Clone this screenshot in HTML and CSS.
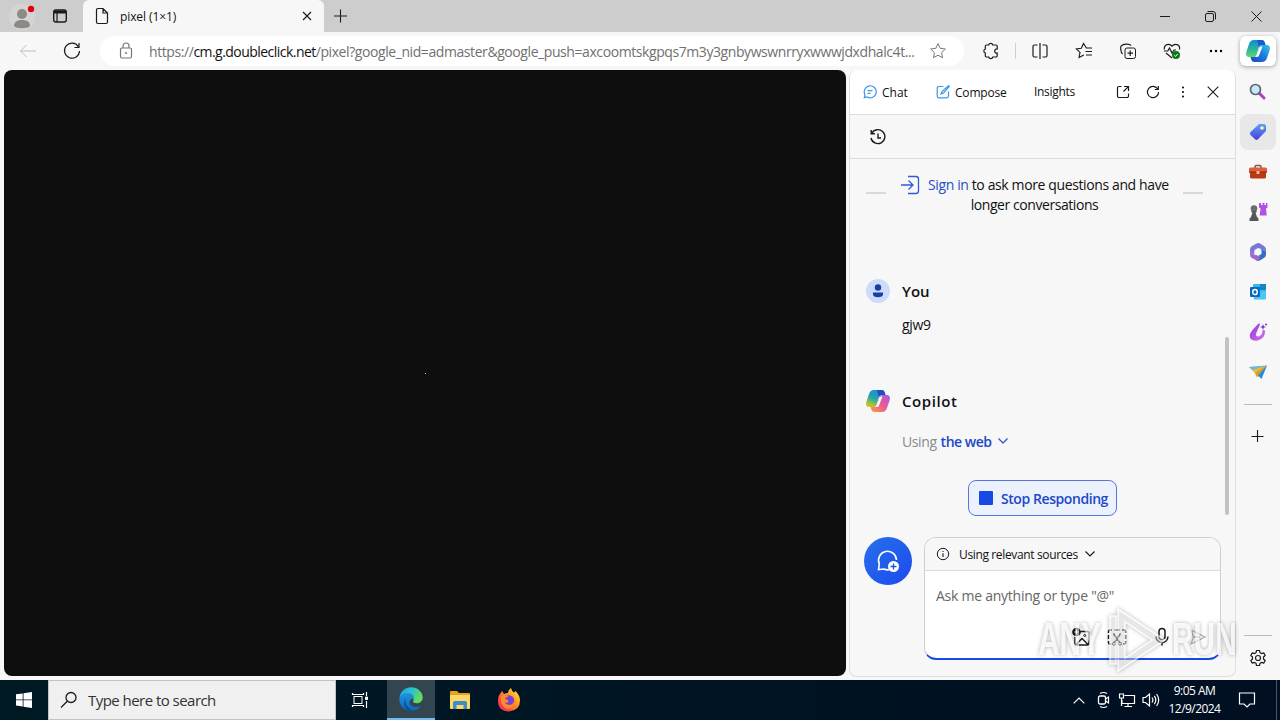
FILE: index.html
```
<!DOCTYPE html>
<html lang="en">
<head>
    <meta charset="utf-8">
    <title>pixel (1×1)</title>
    <link rel="stylesheet" href="styles.css">
</head>
<body>
    <div class="tabbar">
        <div class="tab-actions">
            <div class="profile">
                <svg width="28" height="28" viewBox="0 0 28 28"><circle cx="14" cy="14" r="13" fill="#d6d4d2"/><circle cx="14" cy="11" r="5" fill="#8d8986"/><path d="M6 23c0-4 3-6 8-6s8 2 8 6c-2 3-14 3-16 0z" fill="#8d8986"/><circle cx="23" cy="6" r="3.2" fill="#e0000f"/></svg>
            </div>
            <svg class="line" width="16" height="16" viewBox="0 0 16 16"><rect x="1.7" y="2" width="12.6" height="12" rx="2.2" stroke-width="1.4"/><path d="M2 3.4h12M2 4.6h12" stroke-width="2"/><path d="M5 5v9" stroke-width="1.2"/></svg>
        </div>
        <div class="tab">
            <svg class="line" width="16" height="18" viewBox="0 0 16 18"><path d="M2.5 3c0-.8.5-1.500 1.300-1.500H9l4.500 4.600V15c0 .9-.6 1.500-1.500 1.500H4c-.9 0-1.500-.6-1.500-1.500zM9 1.500V6h4.500" stroke-width="1.200"/></svg>
            <span class="tab-title">pixel (1×1)</span>
            <svg class="line" width="10" height="10" viewBox="0 0 10 10"><path d="M1 1l8 8M9 1L1 9" stroke-width="1.2"/></svg>
        </div>
        <svg class="line new-tab" width="14" height="14" viewBox="0 0 14 14"><path d="M7.500 .5v13M1 7h13" stroke-width="1.1"/></svg>
        <div class="window-buttons">
            <span><svg class="line" width="10" height="10" viewBox="0 0 10 10"><path d="M0 5.500h10"/></svg></span>
            <span><svg class="line" width="11" height="11" viewBox="0 0 11 11"><rect x=".5" y="2.500" width="8" height="8" rx="1.500"/><path d="M2.500.5H8a2.500 2.500 0 0 1 2.500 2.500v5.500"/></svg></span>
            <span><svg class="line" width="11" height="11" viewBox="0 0 11 11"><path d="M.5.5l10 10M10.500.5l-10 10"/></svg></span>
        </div>
    </div>

    <div class="toolbar">
        <span class="tool faded"><svg class="line" width="18" height="14" viewBox="0 0 18 14"><path d="M17 7H1.500M7.500 1L1.500 7l6 6"/></svg></span>
        <span class="tool"><svg class="line" width="18" height="18" viewBox="0 0 18 18"><path d="M15.300 4.600A7.500 7.500 0 1 0 16.500 9M16 1v4.500h-4.500" stroke-width="1.200"/></svg></span>
        <div class="omnibox">
            <svg class="line grey" width="14" height="18" viewBox="0 0 14 18"><rect x="1.500" y="6" width="11" height="10" rx="1.500" stroke-width="1.200"/><path d="M4 6V4a3 3 0 0 1 6 0v2" stroke-width="1.200"/><circle cx="7" cy="11" r=".7"/></svg>
            <span class="url">https://<b>cm.g.doubleclick.net</b>/pixel?google_nid=admaster&amp;google_push=axcoomtskgpqs7m3y3gnbywswnrryxwwwjdxdhalc4t...</span>
            <svg class="line grey" width="18" height="18" viewBox="0 0 18 18"><path d="M9 1.600l2.200 4.700 5.100.7-3.700 3.600.9 5.100L9 13.200l-4.500 2.500.9-5.100L1.700 7l5.100-.7z"/></svg>
        </div>
        <span class="tool ext"><svg class="line" width="18" height="18" viewBox="0 0 18 18"><path d="M4.500 3h2.200a2.100 2.100 0 0 1 4.100 0H14a1.200 1.200 0 0 1 1.200 1.200V7a2.100 2.100 0 1 0 0 4.100v2.700A1.200 1.200 0 0 1 14 15h-3.200a2.100 2.100 0 0 1-4.100 0H4.500a1.200 1.200 0 0 1-1.200-1.200V11a2.100 2.100 0 0 1 0-4V4.200A1.200 1.200 0 0 1 4.500 3z" stroke-width="1.200"/></svg></span>
        <span class="tool-sep"></span>
        <span class="tool"><svg class="line" width="18" height="18" viewBox="0 0 18 18"><path d="M9 1v16M6.500 3H3.500A1.500 1.500 0 0 0 2 4.500v9A1.500 1.500 0 0 0 3.500 15h3M11.500 3h3A1.500 1.500 0 0 1 16 4.500v9a1.500 1.500 0 0 1-1.500 1.500h-3" stroke-width="1.200"/></svg></span>
        <span class="tool"><svg class="line" width="18" height="18" viewBox="0 0 18 18"><path d="M11.500 6.200L8.500 1.500 6.300 6.200l-5 .7L5 10.400l-.9 5.100 4.700-2.600M10.500 9.500H17M11 13h6M11.300 6H17" stroke-width="1.100"/></svg></span>
        <span class="tool"><svg class="line" width="18" height="18" viewBox="0 0 18 18"><rect x="6" y="6" width="10.500" height="10.500" rx="2"/><path d="M11.200 8.500v5.500M8.500 11.200H14M3.500 12C1.800 10.500 1 5 2.300 3.800 4 2 10 1.200 12 3.500" stroke-width="1.200"/></svg></span>
        <span class="tool"><svg class="line" width="18" height="18" viewBox="0 0 18 18"><path d="M1.300 7.500C.8 2 6.500 1 9 4.200 11.500 1 17.500 2 16.500 7.500M.8 9h4l1.700-3 2.500 5 2-3h2M3 11l6 5" stroke-width="1.200"/><circle cx="13" cy="13" r="4" fill="#0d7a16" stroke="none"/><path d="M11.300 13.200l1.300 1.200 2.200-2.500" stroke="#fff"/></svg></span>
        <span class="tool"><svg width="14" height="4" viewBox="0 0 14 4"><circle cx="2" cy="2" r="1.200"/><circle cx="7" cy="2" r="1.200"/><circle cx="12" cy="2" r="1.200"/></svg></span>
        <span class="copilot-button">
            <svg width="26" height="26" viewBox="0 0 26 26">
                <defs>
                    <linearGradient id="cpA" x1="0" y1="0" x2="0" y2="1"><stop offset="0" stop-color="#1488d8"/><stop offset=".5" stop-color="#27b3a0"/><stop offset="1" stop-color="#63d66c"/></linearGradient>
                    <linearGradient id="cpB" x1="1" y1="0" x2="0" y2="1"><stop offset="0" stop-color="#35c3ee"/><stop offset=".5" stop-color="#1b78e0"/><stop offset="1" stop-color="#1848b8"/></linearGradient>
                </defs>
                <path d="M9 2h7.500c2 0 2.800 1.300 3.400 3l.6 2h-3.200c-2 0-3 .9-3.600 2.700l-2 6.600c-.6 2-1.700 2.700-3.500 2.700H4.600C1.600 19 .5 17 1.300 14L4 6c.9-2.800 2.400-4 5-4z" fill="url(#cpA)"/>
                <path d="M12 2h4.500c2 0 2.800 1.300 3.400 3l.6 2h-3.200c-1.700 0-2.800.8-3.400 2.300z" fill="#155fc6"/>
                <path d="M17 24H9.500c-2 0-2.800-1.300-3.400-3l-.6-2h3.200c2 0 3-.9 3.600-2.700l2-6.600c.6-2 1.700-2.700 3.500-2.700h3.600c3 0 4.100 2 3.300 5L22 20c-.9 2.800-2.400 4-5 4z" fill="url(#cpB)"/>
                <path d="M15.500 8.500h2l-3.500 9q-.6 1.500-2.300 1.500h-1.500q1.300-.8 1.900-2.500l2-6q.4-1.300 1.400-2z" fill="#fff"/>
            </svg>
        </span>
    </div>

    <div class="content">
        <div class="page"><span class="pixel"></span></div>

        <div class="panel">
            <div class="panel-tabs">
                <svg class="line" width="14" height="14" viewBox="0 0 14 14"><path d="M1.300 12.700l.7-3A6 6 0 1 1 4.300 12z" class="blue-line"/><path d="M4.500 5.700h5M4.500 8.300h3" class="blue-line"/></svg>
                <span class="chat-label">Chat</span>
                <svg class="line" width="14" height="14" viewBox="0 0 14 14"><path d="M7.500 1.500H3A1.800 1.800 0 0 0 1.200 3.300V11A1.800 1.800 0 0 0 3 12.800h7.700A1.800 1.800 0 0 0 12.500 11V6.500M5 9l1-2.500L12.500.7l.8.8L7.500 8z" class="blue-line"/></svg>
                <span class="compose-label">Compose</span>
                <span class="insights-label">Insights</span>
                <div class="panel-icons">
                    <span><svg class="line" width="14" height="14" viewBox="0 0 14 14"><path d="M5.500 1.500H3A1.500 1.500 0 0 0 1.500 3v8A1.500 1.500 0 0 0 3 12.500h8a1.500 1.500 0 0 0 1.500-1.500V8.500M8 1.500h4.500V6M12.300 1.700L7.500 6.500" stroke-width="1.200"/></svg></span>
                    <span><svg class="line" width="14" height="14" viewBox="0 0 14 14"><path d="M11.700 4A5.600 5.600 0 1 0 12.600 7M12.300 1v3.500H8.800" stroke-width="1.200"/></svg></span>
                    <span><svg width="4" height="14" viewBox="0 0 4 14"><circle cx="2" cy="2.500" r="1"/><circle cx="2" cy="7" r="1"/><circle cx="2" cy="11.500" r="1"/></svg></span>
                    <span><svg class="line" width="12" height="12" viewBox="0 0 12 12"><path d="M.7.7l10.600 10.600M11.300.7L.7 11.300" stroke-width="1.100"/></svg></span>
                </div>
            </div>
            <div class="history">
                <svg class="line" width="18" height="18" viewBox="0 0 18 18"><path d="M2.700 5.300A7 7 0 1 1 2 10M2.200 2v3.700h3.700M9 5.500V10h3" stroke-width="1.400"/></svg>
            </div>
            <div class="signin">
                <i></i>
                <p>
                    <svg class="line" width="20" height="20" viewBox="0 0 20 20"><path d="M8 1.500h8A2.500 2.500 0 0 1 18.500 4v12a2.500 2.500 0 0 1-2.500 2.500H8M1 10h12M8.500 5.500L13 10l-4.500 4.500" class="deep-line"/></svg>
                    <span class="signin-first"><a>Sign in</a> to ask more questions and have</span>
                    <span class="signin-second">longer conversations</span>
                </p>
                <i></i>
            </div>
            <div class="author you">
                <svg width="24" height="24" viewBox="0 0 24 24"><circle cx="12" cy="12" r="12" fill="#ccdcfa"/><circle cx="12" cy="8.500" r="3.200" fill="#173fa8"/><path d="M7 13.500h10v1.700c0 2-2 3-5 3s-5-1-5-3z" fill="#173fa8"/></svg>
                <span>You</span>
            </div>
            <p class="message">gjw9</p>
            <div class="author bot">
                <svg width="26" height="26" viewBox="0 0 26 26">
                    <defs>
                        <linearGradient id="cpC" x1=".5" y1="0" x2="0" y2="1"><stop offset="0" stop-color="#168be0"/><stop offset=".45" stop-color="#2aa6a5"/><stop offset=".75" stop-color="#9bc43c"/><stop offset="1" stop-color="#f5bd23"/></linearGradient>
                        <linearGradient id="cpD" x1="1" y1="0" x2="0" y2="1"><stop offset="0" stop-color="#a55bea"/><stop offset=".5" stop-color="#ee5a93"/><stop offset="1" stop-color="#ffa03d"/></linearGradient>
                    </defs>
                    <path d="M9 2h7.500c2 0 2.800 1.300 3.400 3l.6 2h-3.200c-2 0-3 .9-3.600 2.700l-2 6.600c-.6 2-1.700 2.700-3.500 2.700H4.600C1.600 19 .5 17 1.300 14L4 6c.9-2.800 2.400-4 5-4z" fill="url(#cpC)"/>
                    <path d="M12 2h4.500c2 0 2.800 1.300 3.400 3l.6 2h-3.200c-1.700 0-2.800.8-3.400 2.300z" fill="#1f50bd"/>
                    <path d="M17 24H9.500c-2 0-2.800-1.300-3.400-3l-.6-2h3.200c2 0 3-.9 3.600-2.700l2-6.600c.6-2 1.700-2.700 3.500-2.700h3.600c3 0 4.100 2 3.300 5L22 20c-.9 2.800-2.400 4-5 4z" fill="url(#cpD)"/>
                    <path d="M15.500 8.500h2l-3.500 9q-.6 1.500-2.300 1.500h-1.500q1.300-.8 1.900-2.500l2-6q.4-1.300 1.400-2z" fill="#f7f7f7"/>
                </svg>
                <span>Copilot</span>
            </div>
            <p class="using"><span>Using</span> <b>the web</b>
                <svg class="line" width="10" height="6" viewBox="0 0 10 6"><path d="M.5.500L5 5 9.500.5" class="deep-line"/></svg>
            </p>
            <button class="stop"><i></i><span>Stop Responding</span></button>
            <div class="composer">
                <div class="new-topic">
                    <svg width="24" height="24" viewBox="0 0 24 24" fill="none"><path d="M20.500 11A9 9 0 1 0 3.300 15L2.500 20.500 8 20a9 9 0 0 0 5 .8" stroke="#fff" stroke-width="1.600"/><circle cx="17.500" cy="17.500" r="5.500" fill="#fff"/><path d="M17.500 14.500v6M14.500 17.500h6" stroke="#1c50e8" stroke-width="1.300"/></svg>
                </div>
                <div class="askbox">
                    <div class="sources">
                        <svg class="line" width="14" height="14" viewBox="0 0 14 14"><circle cx="7" cy="7" r="5.700"/><path d="M7 6.300V10M7 4v1.100" stroke-width="1.100"/></svg>
                        <span>Using relevant sources</span>
                        <svg class="line" width="10" height="6" viewBox="0 0 10 6"><path d="M.5.500L5 5 9.500.5" stroke-width="1.200"/></svg>
                    </div>
                    <p class="placeholder">Ask me anything or type "@"</p>
                    <div class="ask-icons">
                        <svg class="line" width="18" height="20" viewBox="0 0 18 20"><path d="M8.500 4.500H15A2 2 0 0 1 17 6.500v9.500a2 2 0 0 1-2 2H5a2 2 0 0 1-2-2v-6M4 17.500l6-6 6 6" stroke-width="1.500"/><circle cx="12.700" cy="8.500" r="1"/><circle cx="4.500" cy="5" r="4.300" fill="#111" stroke="none"/><path d="M4.500 2.800v4.400M2.300 5h4.400" stroke="#fff"/></svg>
                        <svg class="line" width="20" height="20" viewBox="0 0 20 20"><path d="M1.500 6V4.500A1.500 1.500 0 0 1 3 3h2M7.500 3h5M15 3h2a1.500 1.500 0 0 1 1.500 1.500V6M18.500 8v4M18.500 14v1.500A1.500 1.500 0 0 1 17 17h-1M4 17H3a1.500 1.500 0 0 1-1.500-1.500V14M1.500 12V8M6.500 6.500l6 9M13.500 6.500l-6 9" stroke-width="1.500"/><circle cx="7" cy="16.700" r="1.500"/><circle cx="13" cy="16.700" r="1.500"/></svg>
                        <svg class="line mic" width="16" height="20" viewBox="0 0 16 20"><rect x="5" y="1.500" width="6" height="11" rx="3" stroke-width="1.500"/><path d="M2 9.500a6 6 0 0 0 12 0M8 15.500V18.500" stroke-width="1.500"/></svg>
                        <svg class="line send" width="18" height="18" viewBox="0 0 18 18"><path d="M2 2l14 7L2 16l2.500-7zM4.500 9H11" stroke-width="1.300"/></svg>
                    </div>
                </div>
            </div>
            <div class="scroll-thumb"></div>
        </div>

        <div class="sidebar">
            <span><svg width="20" height="20" viewBox="0 0 20 20"><path d="M11 11l5 5" stroke="#b23fc4" stroke-width="3" stroke-linecap="round"/><circle cx="7.500" cy="7.500" r="5" fill="#c4e9fb" stroke="#5f6670" stroke-width="1.700"/></svg></span>
            <span class="selected"><svg width="20" height="20" viewBox="0 0 20 20"><defs><linearGradient id="tag" x1="0" y1="0" x2="0" y2="1"><stop offset="0" stop-color="#5aa0ff"/><stop offset="1" stop-color="#4a3fd2"/></linearGradient></defs><path d="M11 2h5.500L18 3.500V9l-8 8.300q-1.500 1.400-3 0L2.500 13q-1.400-1.500 0-3z" fill="url(#tag)"/><circle cx="14" cy="6" r="1.800" fill="#fff3a0"/></svg></span>
            <span><svg width="20" height="20" viewBox="0 0 20 20"><path d="M7 6V4.500Q7 3.500 8 3.500h4q1 0 1 1V6" fill="none" stroke="#7b5a4e" stroke-width="1.500"/><rect x="1" y="5.500" width="18" height="5.500" rx="1.500" fill="#dc6138"/><path d="M2 10h16v5q0 1.500-1.500 1.500h-13Q2 16.500 2 15z" fill="#b93a14"/><path d="M1 10h18" stroke="#8c2508"/><rect x="8.500" y="9" width="3" height="3" fill="#f5b79c"/></svg></span>
            <span><svg width="20" height="20" viewBox="0 0 20 20"><path d="M11 1h2v2h1.500V1h2v2H18V1h1.500v4.500l-1.500 1 .7 7h-7l.8-7L11 5.500z" fill="#b152e3"/><circle cx="6" cy="6.500" r="3.300" fill="#6c6c70"/><path d="M3.500 9h5v1.500h-1L9 15l1.500 1.500V19h-9v-2.500L3 15l1.500-4.500h-1z" fill="#56565a"/></svg></span>
            <span><svg width="20" height="20" viewBox="0 0 20 20"><path d="M11.500 1.200L16 4q2 1.200 2 3.500v2L12 6.200 6.500 9v4L2 10.500v-3Q2 5.200 4 4l4.500-2.500q1.500-.7 3-.3z" fill="#7b77d8"/><path d="M18 9.500v3.300q0 2-1.700 3l-4.500 2.700q-1.500.8-3 .2L7 13l5.500-1V6.500z" fill="#326fc0"/><path d="M2 10.500L6.500 13l5.300 1-1 5q-1 .3-2.300-.5L4 16q-2-1.200-2-3.500z" fill="#a467c8"/><path d="M10 6l3.500 2v4L10 14l-3.500-2V8z" fill="#f7f7f7"/></svg></span>
            <span><svg width="20" height="20" viewBox="0 0 20 20"><rect x="5" y="2" width="13" height="12" rx="1" fill="#35b6ed"/><path d="M12 2h6v6h-6z" fill="#1683c5"/><path d="M5 10l13-1v7.500q0 1-1 1H6z" fill="#47c8f5"/><rect x="2" y="5" width="10" height="10" rx="1" fill="#0868ba"/><ellipse cx="7" cy="10" rx="2.300" ry="2.600" fill="none" stroke="#fff" stroke-width="1.500"/></svg></span>
            <span><svg width="20" height="20" viewBox="0 0 20 20"><defs><linearGradient id="des" x1="0" y1="0" x2="1" y2="1"><stop offset="0" stop-color="#8a37d6"/><stop offset="1" stop-color="#db73ee"/></linearGradient></defs><path d="M10.500 1.500L4.500 8Q0 13.500 2.800 17q2.500 2.500 7 1.500Q17.500 16.500 17 9q-1-1.500-2.500-.5 0 5-4 6-3.500.5-2-4l3.500-8q0-1.500-1.500-1z" fill="url(#des)"/><path d="M15 2l.8 2.300L18 5l-2.200.8L15 8l-.8-2.200L12 5l2.200-.7z" fill="#6b35c6"/><circle cx="18" cy="2.500" r="1" fill="#6b35c6"/></svg></span>
            <span><svg width="20" height="20" viewBox="0 0 20 20"><path d="M1 5l18-1.500-9 12L7 11z" fill="#f5b92e"/><path d="M7.500 11L19 3.500 13.500 17z" fill="#258ce3"/><path d="M1 5l18-1.500L4.500 8z" fill="#5eb9f4"/><path d="M7 11l12-7.500L8.500 15z" fill="#dba02a"/></svg></span>
            <hr>
            <span><svg class="line" width="14" height="14" viewBox="0 0 14 14"><path d="M6.500 1v12M.5 7.500h12" stroke-width="1.100"/></svg></span>
            <hr class="bottom-rule">
            <span class="settings"><svg class="line" width="18" height="18" viewBox="0 0 18 18"><circle cx="9" cy="9" r="2.500" stroke-width="1.200"/><path d="M7.500 1.500h3l.5 2.200 1.500.9 2.200-.7 1.500 2.600L14.500 8v2l1.700 1.500-1.500 2.600-2.200-.7-1.500.9-.5 2.200h-3L7 14.300l-1.500-.9-2.200.7-1.500-2.600L3.500 10V8L1.800 6.500l1.500-2.600 2.200.7L7 3.700z" stroke-width="1.200" stroke-linejoin="round"/></svg></span>
        </div>
    </div>

    <div class="taskbar">
        <span class="start"><svg width="16" height="16" viewBox="0 0 16 16" fill="#fff"><path d="M0 2.300L6.700 1.400v6.100H0zM7.500 1.300L16 0v7.500H7.500zM0 8.300h6.700v6.200L0 13.600zM7.500 8.300H16V16l-8.500-1.200z"/></svg></span>
        <div class="search">
            <svg class="line" width="18" height="18" viewBox="0 0 18 18"><circle cx="11" cy="6.500" r="5" stroke-width="1.300"/><path d="M7.300 10.200L1 16.500" stroke-width="1.300"/></svg>
            <span>Type here to search</span>
        </div>
        <span class="task"><svg class="line light" width="18" height="16" viewBox="0 0 18 16"><rect x="3" y="4.500" width="8" height="7"/><path d="M1.500 1v1.500h11V1M1.500 15v-1.500h11V15M15.500 0v4M15.500 9v7" stroke-width="1.200"/><path d="M14.500 5h2v2.500h-2z" fill="#fff"/></svg></span>
        <span class="task active"><svg width="24" height="24" viewBox="0 0 24 24"><defs><linearGradient id="edgeA" x1="0" y1="0" x2="1" y2=".5"><stop offset="0" stop-color="#1d9fe2"/><stop offset=".5" stop-color="#2bc3cd"/><stop offset="1" stop-color="#69dc55"/></linearGradient><linearGradient id="edgeB" x1="0" y1="0" x2="0" y2="1"><stop offset="0" stop-color="#1c96de"/><stop offset="1" stop-color="#1164bd"/></linearGradient></defs><path d="M.5 11C1.500 4 6.500.3 12 .3c7 0 11.700 5 11.700 10 0 4-3 6-6 6-2.500 0-4-1-3.500-2.300 1-2 .3-6-5-6-4 0-7 1.500-8.700 3z" fill="url(#edgeA)"/><path d="M.4 11.500C1 8 5 6 9 6c4.500 0 6.500 3 5.500 6-2-1-5 2-3.500 5 1.500 3.500 7 4 11.300 1.500-2 3.500-5.800 5.300-10.300 5.300C5 23.800-.2 18.500.4 11.500z" fill="url(#edgeB)"/><path d="M8 9.500c-3 2.500-2.500 10.500 6 14-8 1.500-12-8-6-14z" fill="#0b4d96"/></svg></span>
        <span class="task"><svg width="22" height="20" viewBox="0 0 22 20"><path d="M1 2q0-1 1-1h6l2 2h10q1 0 1 1v14H1z" fill="#e5a21f"/><path d="M1 5h20v13q0 1-1 1H2q-1 0-1-1z" fill="#ffd767"/><path d="M4 19v-6q0-2 2-2h10q2 0 2 2v6h-3.500v-4h-7v4z" fill="#398fcb"/></svg></span>
        <span class="task"><svg width="24" height="24" viewBox="0 0 24 24"><defs><linearGradient id="ff" x1="1" y1="0" x2="0" y2="1"><stop offset="0" stop-color="#fff14d"/><stop offset=".4" stop-color="#ff9a1f"/><stop offset=".75" stop-color="#ff3e4e"/><stop offset="1" stop-color="#d9226e"/></linearGradient></defs><path d="M5 3l2 3q2-1 4-1 0-3 3-5 .5 3 3 4.500l1.500-1.500q4.500 4.500 4.500 9.500 0 10-11 11Q1 23 1 13q0-5 2-7z" fill="url(#ff)"/><circle cx="12" cy="12.500" r="5.200" fill="#7541d6"/><path d="M4 8q4-2 8 1-4 0-4 2 4 1 3.500 3-2 1.500-4 0 2 4 7 2.500 3.500-2 2.500-6 3 4 0 8-4 3.500-9 1.500-5-3-4-12z" fill="#ff8a26"/></svg></span>
        <div class="tray">
            <span><svg class="line light" width="12" height="7" viewBox="0 0 12 7"><path d="M.7 6.300L6 1l5.300 5.300" stroke-width="1.200"/></svg></span>
            <span><svg class="line light" width="14" height="18" viewBox="0 0 14 18"><rect x="2.500" y="5" width="7" height="8" rx="1.500" stroke-width="1.300"/><path d="M9.500 8l3-2v6l-3-2M4 2.500q3.500-2 7 0M4 15.500q3.500 2 7 0" stroke-width="1.200"/></svg></span>
            <span><svg class="line light" width="18" height="16" viewBox="0 0 18 16"><path d="M6.500 3.500h10v8H4V8M10 11.500v3M6.500 14.500H14M1.500 2h4v4h-4zM3.500 6v8" stroke-width="1.200"/></svg></span>
            <span><svg class="line light" width="18" height="16" viewBox="0 0 18 16"><path d="M1 5.500h2.500l4-3.500v12l-4-3.500H1zM10 5.500q1.800 2.500 0 5M12.300 3.800q3 4.200 0 8.400M14.600 2q4.200 6 0 12" stroke-width="1.200"/></svg></span>
            <div class="clock"><span>9:05 AM</span><span>12/9/2024</span></div>
            <span class="notify"><svg class="line light" width="18" height="18" viewBox="0 0 18 18"><path d="M1.500 2h15v11H12L9 16l-3-3H1.500z" stroke-width="1.200"/></svg></span>
            <span class="show-desktop"></span>
        </div>
    </div>

    <div class="watermark">
        <span class="mark-text">ANY</span>
        <svg class="mark-play" width="60" height="68" viewBox="0 0 60 68"><path d="M3 10h6v48H3zM11 3l47 31-47 31zM18 16v36l27-18z" fill-rule="evenodd"/></svg>
        <span class="mark-text">RUN</span>
    </div>
</body>
</html>
```
FILE: styles.css
```
* {
    box-sizing: border-box;
}

body {
    margin: 0;
    width: 1280px;
    height: 720px;
    overflow: hidden;
    display: flex;
    flex-direction: column;
    background: #f7f7f7;
    color: #111;
    font-family: "Open Sans", "Noto Sans", sans-serif;
    font-size: 14px;
}

p {
    margin: 0;
}

svg {
    flex: none;
    display: block;
}

.line {
    fill: none;
    stroke: #1b1b1b;
}

.line.grey {
    stroke: #777;
}

.line.light {
    stroke: #fff;
}

.blue-line {
    stroke: #3a97e8;
    stroke-width: 1.2;
}

.deep-line {
    stroke: #3458d4;
    stroke-width: 1.3;
}

/* tab strip */
.tabbar {
    height: 32px;
    display: flex;
    align-items: center;
    background: #cdcdcd;
}

.tab-actions {
    width: 83px;
    height: 32px;
    padding-left: 8px;
    display: flex;
    align-items: center;
    gap: 16px;
}

.profile {
    padding-top: 2px;
}

.tab {
    width: 241px;
    height: 32px;
    padding: 0 12px 0 11px;
    display: flex;
    align-items: center;
    gap: 10px;
    background: #f7f7f7;
    border-radius: 6px 6px 0 0;
}

.tab-title {
    flex: 1;
    font-size: 12px;
    letter-spacing: -0.1px;
}

.new-tab {
    margin-left: 9px;
}

.window-buttons {
    margin-left: auto;
    display: flex;
}

.window-buttons span {
    width: 46px;
    padding-right: 1px;
    display: flex;
    justify-content: center;
}

/* address bar */
.toolbar {
    height: 38px;
    padding-left: 6px;
    display: flex;
    align-items: center;
}

.tool {
    width: 44px;
    display: flex;
    justify-content: center;
}

.faded {
    opacity: 0.25;
}

.omnibox {
    width: 864px;
    height: 30px;
    margin-left: 6px;
    padding: 0 17px 0 19px;
    display: flex;
    align-items: center;
    border-radius: 15px;
    background: #fff;
}

.url {
    flex: 1;
    margin-left: 16px;
    white-space: nowrap;
    color: #707070;
    font-size: 14px;
    letter-spacing: -0.42px;
}

.url b {
    font-weight: 400;
    color: #111;
    letter-spacing: -0.54px;
}

.ext {
    margin-left: 5px;
}

.tool-sep {
    width: 1px;
    height: 16px;
    margin: 0 2px;
    background: #d0d0d0;
}

.copilot-button {
    width: 36px;
    height: 30px;
    margin-left: 2px;
    display: flex;
    align-items: center;
    justify-content: center;
    background: #fff;
    border-radius: 6px;
    box-shadow: 0 1px 4px rgba(0, 0, 0, 0.35);
}

/* page and copilot panel */
.content {
    height: 610px;
    display: flex;
}

.page {
    width: 842px;
    height: 606px;
    margin-left: 4px;
    display: flex;
    align-items: center;
    justify-content: center;
    border-radius: 8px;
    background: #0e0e0e;
}

.pixel {
    width: 1px;
    height: 1px;
    background: #ccc;
}

.panel {
    position: relative;
    width: 387px;
    height: 607px;
    margin-left: 3px;
    display: flex;
    flex-direction: column;
    border: 1px solid #dedede;
    border-top: none;
    border-radius: 8px;
    background: #f7f7f7;
    overflow: hidden;
}

.panel-tabs {
    height: 45px;
    padding-left: 13px;
    display: flex;
    align-items: center;
    background: #fff;
    border-bottom: 1px solid #dcdcdc;
    font-size: 12px;
}

.chat-label {
    width: 54px;
    margin-left: 5px;
}

.compose-label {
    width: 79px;
    margin-left: 5px;
    letter-spacing: -0.2px;
}

.insights-label {
    padding-bottom: 2px;
    letter-spacing: -0.3px;
}

.panel-icons {
    margin-left: auto;
    padding-right: 7px;
    display: flex;
}

.panel-icons span {
    width: 30px;
    display: flex;
    align-items: center;
    justify-content: center;
}

.history {
    height: 44px;
    padding-left: 19px;
    display: flex;
    align-items: center;
    border-bottom: 1px solid #dcdcdc;
}

.signin {
    height: 75px;
    padding: 16px 0 0 16px;
    display: flex;
    line-height: 20px;
}

.signin > i {
    width: 20px;
    height: 2px;
    margin-top: 17px;
    background: #d8d8d8;
}

.signin p {
    width: 297px;
    padding-left: 14px;
    display: flex;
    flex-wrap: wrap;
    align-content: flex-start;
    column-gap: 8px;
}

.signin-first {
    width: 246px;
    white-space: nowrap;
    letter-spacing: -0.38px;
}

.signin-first a {
    color: #2350c8;
}

.signin-second {
    width: 100%;
    padding-right: 14px;
    text-align: center;
    letter-spacing: -0.43px;
}

.author {
    height: 26px;
    display: flex;
    align-items: center;
    font-size: 15px;
    font-weight: 600;
}

.you {
    margin-top: 44px;
    padding-left: 16px;
    gap: 12px;
}

.message {
    height: 20px;
    margin: 11px 0 0 52px;
    line-height: 20px;
    letter-spacing: -0.3px;
}

.bot {
    margin-top: 53px;
    padding-left: 15px;
    gap: 11px;
    letter-spacing: 0.6px;
}

.using {
    height: 20px;
    margin: 17px 0 0 52px;
    display: flex;
    align-items: center;
    gap: 4px;
    color: #8a8a8a;
    letter-spacing: -0.4px;
}

.using b {
    margin-right: 3px;
    color: #2148c7;
    font-weight: 600;
    letter-spacing: -0.5px;
}

.stop {
    width: 149px;
    height: 36px;
    margin: 29px 0 0 118px;
    padding: 0 0 0 10px;
    flex: none;
    display: flex;
    align-items: center;
    gap: 8px;
    border: 1px solid #5a74dd;
    border-radius: 8px;
    background: #ebf2fd;
    color: #2148c7;
    font: 600 14px "Open Sans", "Noto Sans", sans-serif;
    letter-spacing: -0.43px;
    white-space: nowrap;
}

.stop i {
    width: 14px;
    height: 14px;
    border-radius: 1px;
    background: #174ae4;
}

.composer {
    margin: 21px 0 0 14px;
    display: flex;
    gap: 12px;
}

.new-topic {
    width: 48px;
    height: 48px;
    display: flex;
    align-items: center;
    justify-content: center;
    border-radius: 50%;
    background: linear-gradient(135deg, #2870ea, #1b4aef);
}

.askbox {
    width: 297px;
    height: 123px;
    border: 1px solid #d0d0d0;
    border-bottom: 2px solid #174ae4;
    border-radius: 12px;
    background: #fff;
    overflow: hidden;
}

.sources {
    height: 33px;
    padding-left: 11px;
    display: flex;
    align-items: center;
    background: #f7f7f7;
    border-bottom: 1px solid #dadada;
    font-size: 12px;
}

.sources span {
    width: 119px;
    margin: 0 7px 0 9px;
    white-space: nowrap;
    letter-spacing: -0.36px;
}

.placeholder {
    margin: 15px 0 0 11px;
    line-height: 20px;
    color: #666;
    letter-spacing: -0.25px;
}

.ask-icons {
    margin-top: 21px;
    padding-left: 147px;
    display: flex;
    align-items: center;
}

.ask-icons .line:nth-child(2) {
    margin-left: 17px;
}

.mic {
    margin-left: 27px;
}

.send {
    margin-left: 19px;
    opacity: 0.35;
}

.scroll-thumb {
    position: absolute;
    right: 6px;
    top: 267px;
    width: 4px;
    height: 178px;
    border-radius: 2px;
    background: #c2c2c2;
}

/* app sidebar */
.sidebar {
    width: 44px;
    height: 610px;
    padding: 4px 0 0 4px;
    display: flex;
    flex-direction: column;
    gap: 4px;
}

.sidebar span {
    width: 36px;
    height: 36px;
    display: flex;
    align-items: center;
    justify-content: center;
    border-radius: 8px;
}

.sidebar .selected {
    background: #e8e8e8;
}

.sidebar hr {
    width: 28px;
    height: 1px;
    margin: 10px 0 9px 4px;
    border: none;
    background: #bbb;
}

.sidebar .bottom-rule {
    margin: auto 0 0 4px;
}

.sidebar .settings {
    margin-bottom: 4px;
}

/* windows taskbar */
.taskbar {
    height: 40px;
    display: flex;
    background: linear-gradient(90deg, #001a24, #000f22);
    color: #fff;
}

.start {
    width: 48px;
    display: flex;
    align-items: center;
    justify-content: center;
}

.search {
    width: 288px;
    padding-left: 11px;
    display: flex;
    align-items: center;
    gap: 10px;
    border: 1px solid #c4c4c4;
    background: #f0f0f0;
    color: #333;
    font-size: 15px;
    letter-spacing: -0.54px;
}

.task {
    width: 49px;
    display: flex;
    align-items: center;
    justify-content: center;
}

.search + .task {
    width: 51px;
    padding-right: 3px;
}

.active {
    width: 48px;
    background: #33464f;
    border-bottom: 2px solid #76b9ed;
}

.tray {
    margin-left: auto;
    display: flex;
}

.tray > span {
    width: 24px;
    display: flex;
    align-items: center;
    justify-content: center;
}

.clock {
    width: 63px;
    display: flex;
    flex-direction: column;
    justify-content: center;
    align-items: center;
    font-size: 12px;
    line-height: 18px;
    letter-spacing: -0.55px;
}

.tray .notify {
    width: 42px;
}

.tray .show-desktop {
    width: 4px;
    margin-left: 8px;
    border-left: 1px solid #4a5563;
}

/* overlay mark in the lower right corner */
.watermark {
    position: absolute;
    left: 1038px;
    top: 606px;
    width: 200px;
    display: flex;
    align-items: center;
    gap: 5px;
    opacity: 0.7;
    filter: drop-shadow(0 0 2px rgba(0, 0, 0, 0.5));
}

.mark-text {
    width: 64px;
    padding-bottom: 2px;
    color: rgba(255, 255, 255, 0.85);
    font: 700 46px/60px "Liberation Sans", sans-serif;
    white-space: nowrap;
    transform: scaleX(0.65);
    transform-origin: left;
}

.mark-play {
    fill: rgba(255, 255, 255, 0.55);
    stroke: rgba(255, 255, 255, 0.9);
    stroke-width: 1.5;
}
```
